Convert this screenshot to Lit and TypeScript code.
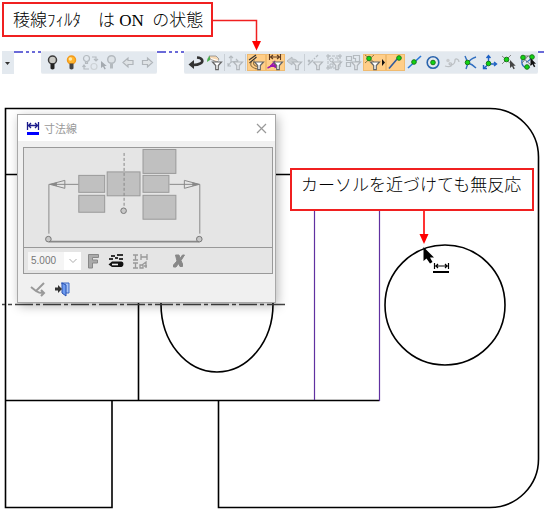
import { LitElement, html, css, svg, SVGTemplateResult } from "lit";
import { customElement } from "lit/decorators.js";
import { classMap } from "lit/directives/class-map.js";

type Tool = { label: string; art: SVGTemplateResult; on?: boolean; off?: boolean; wide?: boolean; sep?: boolean };

const funnel = (stroke: string, fill: string) =>
  svg`<path d="M7.5 8h9l-3.2 3.6v4h-2.6v-4z" fill=${fill} stroke=${stroke} stroke-width="1.2"/>`;
const grayFunnel = funnel("#b2b7bc", "#e6eaee");
const darkFunnel = funnel("#666", "#fff");
const dot = (x: number, y: number) =>
  svg`<circle cx=${x} cy=${y} r="2.3" fill="#12d412" stroke="#1a7a1a" stroke-width="1"/>`;
const bulb = (glass: string, line: string, base: string) => svg`
  <circle cx="9.5" cy="6" r="4" fill=${glass} stroke=${line} stroke-width="1.5"/>
  <path d="M7.5 9.5h4v5q-2 1.8-4 0z" fill=${base}/>`;

const lamps: Tool[] = [
  { label: "非表示", art: bulb("#c9c9c4", "#3c3c3c", "#222") },
  { label: "表示", art: svg`${bulb("#ffb52e", "#f39a1a", "#444")}<circle cx="8.4" cy="5" r="1.8" fill="#ffe9a8"/>` },
  {
    label: "表示切替", off: true,
    art: svg`<g fill="none" stroke="#b4babf" stroke-width="1.2"><circle cx="5.5" cy="4.5" r="3"/><path d="M4.5 8h2v1.5h-2z"/><circle cx="13" cy="12.5" r="3" stroke="#cdd2d6"/><path d="M11 3h4v4M13 5l2 2 2-2M3 12v3h5M1.5 13l1.5-2 1.5 2"/></g>`,
  },
  {
    label: "選択表示", off: true,
    art: svg`<circle cx="11.5" cy="5.5" r="3.8" fill="#dde2e6" stroke="#b4babf" stroke-width="1.5"/><path d="M10 9.5h3v5h-3z" fill="#b4babf"/><path d="M1 7v7l2-1.5 1.5 3 1.3-.7-1.5-2.8h2.5z" fill="#a4aab0"/>`,
  },
  { label: "前へ", off: true, art: svg`<path d="M4 8.5l5-4.5v2.5h5v4h-5v2.5z" fill="#dfe3e6" stroke="#b0b5ba" stroke-width="1.2"/>` },
  { label: "次へ", off: true, art: svg`<path d="M14.5 8.5l-5-4.5v2.5h-5v4h5v2.5z" fill="#dfe3e6" stroke="#b0b5ba" stroke-width="1.2"/>` },
];

const tools: Tool[] = [
  {
    label: "戻る",
    art: svg`<path d="M11 3.5c6 .5 6.500 4 3.500 5.800-2 1.300-4.500 1.700-7.500 1.700" fill="none" stroke="#333" stroke-width="2.6"/><path d="M2.500 10.500l5.500-4.500v9z" fill="#333"/>`,
  },
  {
    label: "要素フィルタ",
    art: svg`<path d="M4 2h7l3 3-2 3-7-3z" fill="#f7d9b4" stroke="#888" stroke-width=".8"/><path d="M2 8c0-3 1-5 3-6v4z" fill="#4caf50"/><path d="M6 4.5l7 2" stroke="#fff"/>${darkFunnel}`,
  },
  {
    label: "座標フィルタ", off: true, sep: true,
    art: svg`<path d="M5 9V2M3 4l2-2 2 2M5 8l7-1M10 5l2 2-2 2M5 8l-3 4M2 9v3h3" fill="none" stroke="#b4babf" stroke-width="1.1"/>${grayFunnel}`,
  },
  {
    label: "稜線フィルタ", on: true, sep: true,
    art: svg`<path d="M2 6l7-5M2.500 9l7-6" stroke="#333" stroke-width="1.2"/><path d="M4.500 8c-2 3 0 6 6 7M7.500 6.500c-2 3-1 5 3 6" fill="none" stroke="#8f7040" stroke-width="1.1"/>${darkFunnel}`,
  },
  {
    label: "寸法フィルタ", on: true,
    art: svg`<path d="M3.5 0v6M14.5 0v6M4 3h10M7 1L4.500 3 7 5M11 1l2.500 2L11 5" fill="none" stroke="#5f3b20" stroke-width="1.1"/><path d="M1.500 14c4-1 5-4 7-6l1 6M4 12h5" fill="none" stroke="#9b16ae" stroke-width="1.8"/>${darkFunnel}`,
  },
  {
    label: "面フィルタ", off: true,
    art: svg`<path d="M2 7l5-4v2c3 0 5 1 6 3l-6 1v2z" fill="#c9ced2" stroke="#b4babf"/>${grayFunnel}`,
  },
  {
    label: "線フィルタ", off: true, sep: true,
    art: svg`<path d="M2 11l5-5M8 5l1-1M10 3l2-2M2 6l2 2M4 6l-2 2" stroke="#b4babf" stroke-width="1.3"/>${grayFunnel}`,
  },
  {
    label: "グループフィルタ", off: true,
    art: svg`<path d="M3 2h12v12H3z" fill="none" stroke="#b4babf" stroke-dasharray="3 1"/><circle cx="6.5" cy="6" r="1.8" fill="none" stroke="#b4babf"/><path d="M10 4h3v3M5 10h3v3H5zM2 1h2v2H2zM14 1h2v2h-2zM2 13h2v2H2z" fill="none" stroke="#b4babf"/>${grayFunnel}`,
  },
  {
    label: "部品フィルタ", off: true,
    art: svg`<path d="M2.5 2.5h5v4h-5zM2.5 8.5h4v4h-4zM9.5 1.5h6v6h-4v-3h-2z" fill="none" stroke="#b4babf" stroke-width="1.2"/>${grayFunnel}`,
  },
  {
    label: "点フィルタ", on: true, wide: true,
    art: svg`<path d="M2 1l10 8M11 1L2 9" stroke="#927845"/>${dot(6, 4.5)}${darkFunnel}<path d="M19 5v7l3-3.5z" fill="#111"/>`,
  },
  { label: "端点", on: true, art: svg`<path d="M3 14.5L12 4" stroke="#315a9c" stroke-width="1.6"/>${dot(13, 4)}` },
  { label: "中点", art: svg`<path d="M3 14L16 2" stroke="#2877d8" stroke-width="1.6"/>${dot(9, 8)}` },
  { label: "中心", art: svg`<circle cx="9" cy="8.5" r="5.8" fill="none" stroke="#2a64ad" stroke-width="1.6"/>${dot(9, 8.5)}` },
  {
    label: "線上点", off: true,
    art: svg`<path d="M2 12c6 2 8-1 6-3-2-1-3 2 0 2s4-3 4-5 4-1 4 2" fill="none" stroke="#bcc0c4" stroke-width="1.3"/><circle cx="5" cy="6.5" r="1.7" fill="#c8cbce"/>`,
  },
  { label: "交点", art: svg`<path d="M3 2l3 7-2 6M14 3Q8 5 6 9q4 1 8 5" fill="none" stroke="#2f6ec0" stroke-width="1.4"/>${dot(5.5, 8.5)}` },
  {
    label: "座標", art: svg`<path d="M7.500 10V2M5.500 4l2-2.500 2 2.500M8 10h7M13 8l2.500 2-2.500 2M8 10l-5 4M2.500 11v3.500H6" fill="none" stroke="#1f62c4" stroke-width="1.4"/>${dot(7.5, 9.5)}`,
  },
  {
    label: "任意点", art: svg`<path d="M2 2l9 8M11 1L2 10" stroke="#888"/>${dot(6.5, 5.5)}<path d="M10 6v8l2-1.8 1.5 3 1.300-.7-1.500-2.800h2.400z" fill="#444"/>`,
  },
  {
    label: "自動", art: svg`<path d="M3 6c-1 6 3 9 8 7M7 8c2 0 5-3 6-6" fill="none" stroke="#2f6ec0" stroke-width="1.3"/><path d="M3 3l9 8M9 2L3 9M6 2l6 0" stroke="#777"/>${dot(4, 3.5)}${dot(13, 3)}${dot(8, 13)}<path d="M11.500 4v8l2-1.800 1.500 3 1.300-.7-1.500-2.800h2.200z" fill="#111"/>`,
  },
];

@customElement("tool-strip")
class ToolStrip extends LitElement {
  static properties = { items: { attribute: false } };
  declare items: Tool[];

  static styles = css`
    :host { display: flex; align-items: center; height: 23px; box-sizing: border-box; padding-left: 2px;
      background: #e3e9ef; border: solid #eceff2; border-width: 1px 0; border-radius: 2px; }
    button { flex: none; width: 19px; height: 17px; padding: 0; border: 0; background: none; }
    button.on { background: #ffce88; box-shadow: inset 0 0 0 1px #f0bb70; }
    button.wide { width: 23px; }
    .sep { flex: none; width: 2px; height: 17px; box-sizing: border-box; border-left: 1px solid #c9cfd5; }
    svg { display: block; width: 100%; height: 17px; }
  `;

  render() {
    return this.items.map((t) => html`
      ${t.sep ? html`<span class="sep"></span>` : ""}
      <button class=${classMap({ on: !!t.on, wide: !!t.wide })} aria-label=${t.label} ?disabled=${!!t.off}>
        <svg viewBox=${t.wide ? "0 0 23 17" : "0 0 19 17"}>${t.art}</svg>
      </button>`);
  }
}

@customElement("dimension-dialog")
class DimensionDialog extends LitElement {
  static styles = css`
    :host { display: block; box-sizing: border-box; border: 1px solid #a8a8a8; background: #f0f0f0;
      box-shadow: 2px 3px 10px rgba(0, 0, 0, 0.28); font: 11px/14px "Noto Sans CJK JP", sans-serif; color: #888; }
    header { display: flex; align-items: center; gap: 4px; height: 26px; padding: 0 8px; background: #fff; }
    h1 { flex: 1; margin: 0; font-size: 11px; font-weight: 400; color: #999; }
    button { display: block; padding: 0; border: 0; background: none; flex: none; }
    svg { display: block; }
    .panel { margin: 6px 2px 0 5px; border: 1px solid #999; background: #e5e5e5; }
    .row { display: flex; align-items: center; height: 25px; padding-left: 4px; gap: 6px; border-top: 1px solid #999; }
    .combo { position: relative; width: 53px; height: 18px; background: #fff; }
    .combo svg { position: absolute; right: 4px; top: 6px; pointer-events: none; }
    select { appearance: none; width: 100%; height: 18px; padding: 0 0 0 3px; border: 0; border-radius: 0;
      background: linear-gradient(90deg, #f5f5f5 36px, #fff 36px);
      font: 10px/16px "Liberation Sans", sans-serif; color: #777; opacity: 1; }
    .clear { margin-left: 18px; }
    footer { display: flex; gap: 8px; padding: 7px 12px 5px; }
  `;

  render() {
    return html`
      <header>
        <svg width="14" height="16" viewBox="0 0 14 16">
          <path d="M1.5 2v8M12.5 2v8M2 5.5h10M5 3L2.5 5.5 5 8M9 3l2.5 2.5L9 8" fill="none" stroke="#1c1c8c" stroke-width="1.3"/>
          <path d="M1 12h12v3H1z" fill="#00f"/>
        </svg>
        <h1>寸法線</h1>
        <button aria-label="閉じる">
          <svg width="11" height="11" viewBox="0 0 11 11"><path d="M1 1l9 9M10 1L1 10" stroke="#999" stroke-width="1.2"/></svg>
        </button>
      </header>
      <div class="panel">
        <svg width="100%" height="99" viewBox="24 148 249 99" preserveAspectRatio="xMinYMin">
          <g fill="none" stroke="#888">
            <path d="M49 234V184.5h30M170 184.5h30.5V234"/>
            <path d="M50 184.5l15-4v8zM200 184.5l-15-4v8z"/>
            <path d="M50 184.5l7-2v4zM200 184.5l-7-2v4z" fill="#888" stroke="none"/>
            <path d="M49 242h151" stroke-width="2"/>
          </g>
          <g fill="#c0c0c0" stroke="#999">
            <rect x="79" y="175.5" width="26" height="17"/><rect x="79" y="195.5" width="26" height="17"/>
            <rect x="107.5" y="172" width="33" height="24"/>
            <rect x="143.5" y="149.5" width="33" height="24"/>
            <rect x="143.5" y="175.5" width="26" height="17"/><rect x="143.5" y="195.5" width="33" height="24"/>
          </g>
          <path d="M124.5 153v55" stroke="#888" stroke-dasharray="3 2"/>
          <g fill="#c8c8c8" stroke="#777"><circle cx="124" cy="211" r="2.8"/><circle cx="48.5" cy="239.5" r="2.8"/><circle cx="200" cy="239.5" r="2.8"/></g>
        </svg>
        <div class="row">
          <div class="combo">
            <select aria-label="文字高さ"><option>5.000</option></select>
            <svg width="8" height="6" viewBox="0 0 8 6"><path d="M.5 1L4 4.5 7.5 1" fill="none" stroke="#aaa"/></svg>
          </div>
          <button aria-label="フォント">
            <svg width="13" height="16" viewBox="0 0 13 16"><path d="M1.5 1.5h10v3h-6v2.5h5v3h-5v5h-4z" fill="#aaa" stroke="#888"/></svg>
          </button>
          <button aria-label="矢印">
            <svg width="20" height="16" viewBox="0 0 20 16">
              <path d="M5 3h4M11 2h6M3 6h4M9 5h3M13 6h4" stroke="#333" stroke-width="2"/>
              <path d="M2.500 11.500L6 8.500h9.500q2 0 2 2.500t-2 3H6z" fill="#111"/>
              <path d="M6 11.500h6" stroke="#eee" stroke-width="1.600"/>
            </svg>
          </button>
          <button aria-label="寸法補助">
            <svg width="16" height="16" viewBox="0 0 16 16">
              <path d="M1 2h5M3.5 2v5M1 7h5M9 1v6M15 1v6M9 4h6M1 10h5M3.5 10v5M1 15h5M8 12h3v3H8zM10 12l4-3v6M12 13h3" fill="none" stroke="#999" stroke-width="1.3"/>
            </svg>
          </button>
          <button class="clear" aria-label="解除">
            <svg width="14" height="16" viewBox="0 0 14 16"><path d="M3.500 2h3.500l1 3.500 2.500-3.500h2L9 7.500l1.500 3.500v2.500H8L6.500 10.500 4 14H1.500v-2L5 8z" fill="#888" stroke="#888"/></svg>
          </button>
        </div>
      </div>
      <footer>
        <button aria-label="適用">
          <svg width="16" height="16" viewBox="0 0 16 16"><path d="M1 6l5 4 8-8M6 10q3 2 7 2M11 9l3 3-3 3" fill="none" stroke="#999" stroke-width="2"/></svg>
        </button>
        <button aria-label="終了">
          <svg width="16" height="16" viewBox="0 0 16 16"><path d="M7 2h8v10h-3" fill="#a9c5f5" stroke="#3a66c4"/><path d="M8 2l4 2v11l-4-3z" fill="#6d9bf0" stroke="#2850b0"/><path d="M1 6.5h3V4l4 4-4 4V9.5H1z" fill="#333"/></svg>
        </button>
      </footer>`;
  }
}

@customElement("app-root")
class AppRoot extends LitElement {
  static styles = css`
    :host { display: block; background: #fff; color: #000; overflow: hidden;
      font: 17px/20px "Liberation Serif", "Noto Sans CJK JP", serif; }
    .top { display: flex; align-items: flex-start; height: 51px; box-sizing: border-box; padding: 2px 0 0 2px; }
    .note { box-sizing: border-box; border: 2px solid #f02020; background: #fff; white-space: pre; font-weight: 300; }
    .top .note { height: 35px; padding: 7px 9px; width: 211px; }
    .bars { display: flex; padding-left: 2px; }
    .dash { flex: 0 0 27px; height: 2px;
      background: repeating-linear-gradient(90deg, #6a6ad8 0 9px, transparent 9px 12px, #6a6ad8 12px 15px,
        transparent 15px 18px, #6a6ad8 18px 21px, transparent 21px 24px, #6a6ad8 24px 27px); }
    .dash.rest { flex: 1 1 0; }
    .more { width: 12px; height: 23px; padding: 0; border: 0; background: #e3e9ef; }
    .lamps { width: 116px; }
    svg { display: block; }
    .canvas { position: relative; }
    .drawing { width: 100%; height: 439px; }
    dimension-dialog { position: absolute; left: 17px; top: 40px; width: 259px; }
    .canvas .note { position: absolute; left: 290px; top: 94px; width: 244px; height: 43px; padding: 6px 9px; }
    .pointer { position: absolute; left: 418px; top: 137px; }
  `;

  render() {
    return html`
      <div class="top">
        <div class="note">稜線ﾌｨﾙﾀ    は ON  の状態</div>
        <svg width="50" height="49" viewBox="0 0 50 49">
          <path d="M0 18.5h43.5V40" fill="none" stroke="#f02020" stroke-width="1.5"/>
          <path d="M39 39h9l-4.5 9.5z" fill="#f00"/>
        </svg>
      </div>
      <div class="bars">
        <button class="more" aria-label="その他">
          <svg width="12" height="23" viewBox="0 0 12 23"><path d="M3 11h5l-2.5 3z" fill="#333"/></svg>
        </button>
        <div class="dash"></div>
        <tool-strip class="lamps" .items=${lamps}></tool-strip>
        <div class="dash"></div>
        <tool-strip .items=${tools}></tool-strip>
        <div class="dash rest"></div>
      </div>
      <div class="canvas">
        <svg class="drawing" viewBox="0 74 544 439" preserveAspectRatio="xMinYMin">
          <g fill="none" stroke="#000" stroke-width="1.6">
            <path d="M112 400.5V507.5H5.5V108.5H490a48.5 48.5 0 0 1 48.5 48.5V459a48.5 48.5 0 0 1-48.5 48.5H218.5V400.5"/>
            <path d="M5 174.5h309M138.5 300V400.5M5 400.5h374.5"/>
            <ellipse cx="217" cy="304" rx="56" ry="68"/>
            <circle cx="445" cy="305" r="60"/>
          </g>
          <path d="M2 304.5h283" stroke="#444" stroke-width="1.3" stroke-dasharray="18 3 4 3" stroke-dashoffset="15"/>
          <path d="M314.5 174V400M379.5 174V401" stroke="#6030a0" stroke-width="1.2"/>
        </svg>
        <dimension-dialog></dimension-dialog>
        <div class="note">カーソルを近づけても無反応</div>
        <svg class="pointer" width="34" height="64" viewBox="418 211 34 64">
          <path d="M424 211v24" stroke="#f00" stroke-width="1.6"/>
          <path d="M419.5 234h9l-4.5 10z" fill="#f00"/>
          <path d="M423.5 247v14l3-2.500 3.500 5 2.500-1.500-2.500-4.500h4z" fill="#000"/>
          <path d="M434.5 263v6M448.5 263v6M435 266h13M438 264l-2 2 2 2M445 264l2 2-2 2" fill="none" stroke="#000" stroke-width="1.2"/>
          <path d="M433 271h16v2h-16z"/>
        </svg>
      </div>`;
  }
}
